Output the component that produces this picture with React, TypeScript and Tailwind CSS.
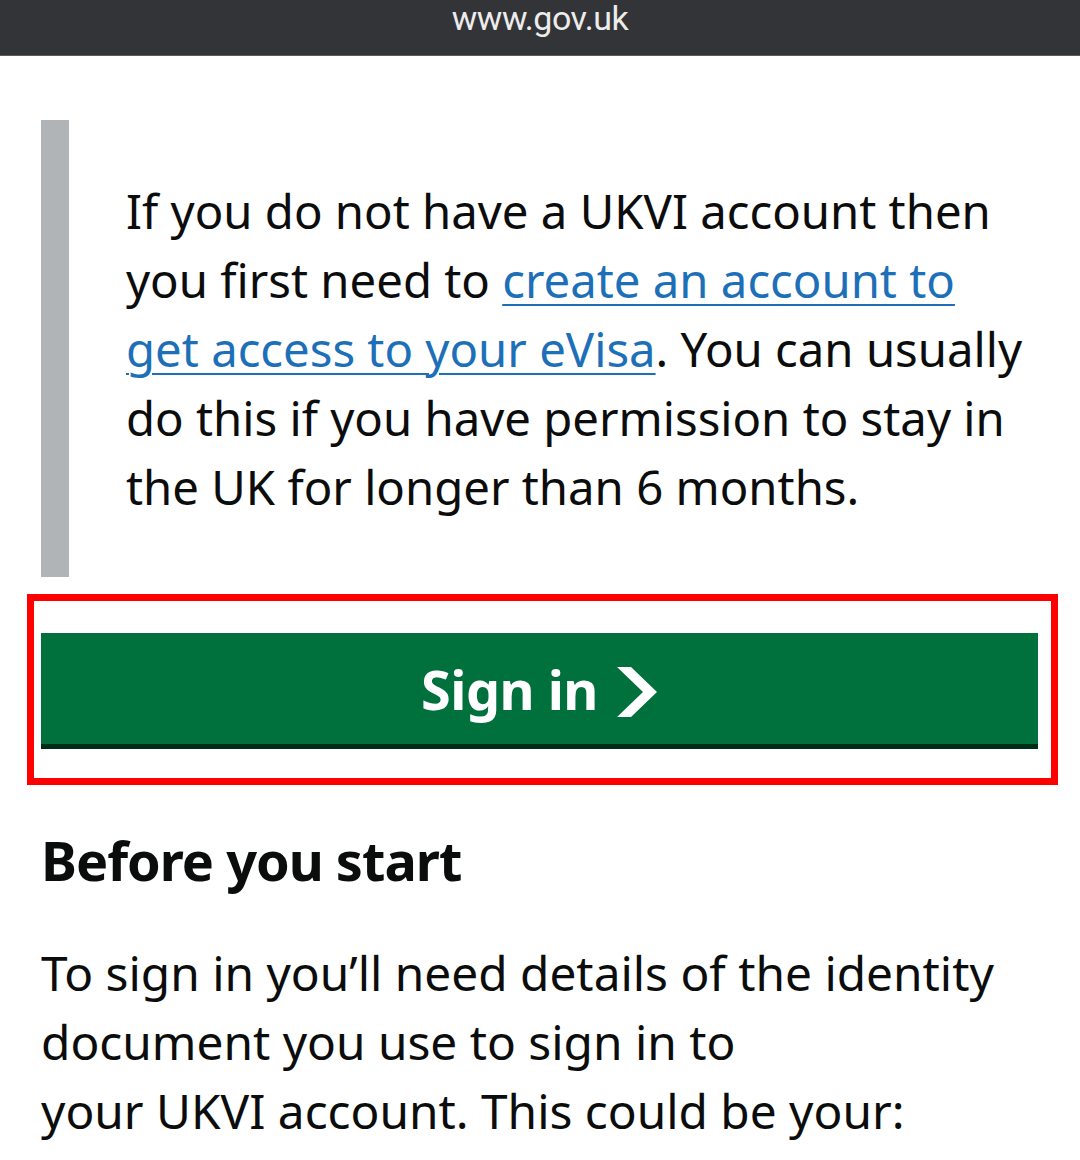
import React from 'react';

const font = { fontFamily: '"Noto Sans", "Open Sans", Arial, sans-serif' };

const Link = ({ children }: { children: React.ReactNode }) => (
  <a href="#" className="text-[#1d70b8] underline decoration-[2px] underline-offset-[6px]">
    {children}
  </a>
);

const SignInButton = () => (
  <button className="flex h-[111px] w-full items-center justify-center gap-[18px] bg-[#00703c] text-white shadow-[0_5px_0_#002d18]">
    <span className="text-[54px] font-bold leading-none tracking-[-0.5px]">Sign in</span>
    <svg width="42" height="50" viewBox="0 0 42 50" className="mt-[6px]">
      <path d="M1 0 H15 L41 25 L15 50 H1 L27 25 Z" fill="white" />
    </svg>
  </button>
);

export default function App() {
  return (
    <div className="min-h-[1160px] w-[1080px] bg-white text-[#0b0c0c]" style={font}>
      <div className="flex h-[56px] items-start justify-center border-b border-[#5a5b5f] bg-[#333438]">
        <span className="text-[34px] leading-[36px] tracking-[-0.5px] text-[#ececec]" style={{ fontFamily: 'Roboto, sans-serif' }}>
          www.gov.uk
        </span>
      </div>

      <div className="ml-[41px] mt-[64px] flex">
        <div className="w-[28px] shrink-0 bg-[#b1b4b6]" />
        <p className="py-[56px] pl-[57px] text-[47.3px] leading-[69px] whitespace-nowrap">
          If you do not have a UKVI account then
          <br />
          you first need to <Link>create an account to<br />get access to your eVisa</Link>. You can usually
          <br />
          do this if you have permission to stay in
          <br />
          the UK for longer than 6 months.
        </p>
      </div>

      <div className="ml-[27px] mt-[17px] w-[1031px] border-[7px] border-[#ff0000] pb-[34px] pl-[7px] pr-[13px] pt-[32px]">
        <SignInButton />
      </div>

      <div className="px-[41px]">
        <h2 className="mt-[42px] text-[54px] font-bold leading-[66px] tracking-[-1px]">Before you start</h2>
        <p className="mt-[45px] text-[47.8px] leading-[69px] whitespace-nowrap">
          To sign in you’ll need details of the identity
          <br />
          document you use to sign in to
          <br />
          your UKVI account. This could be your:
        </p>
      </div>
    </div>
  );
}
